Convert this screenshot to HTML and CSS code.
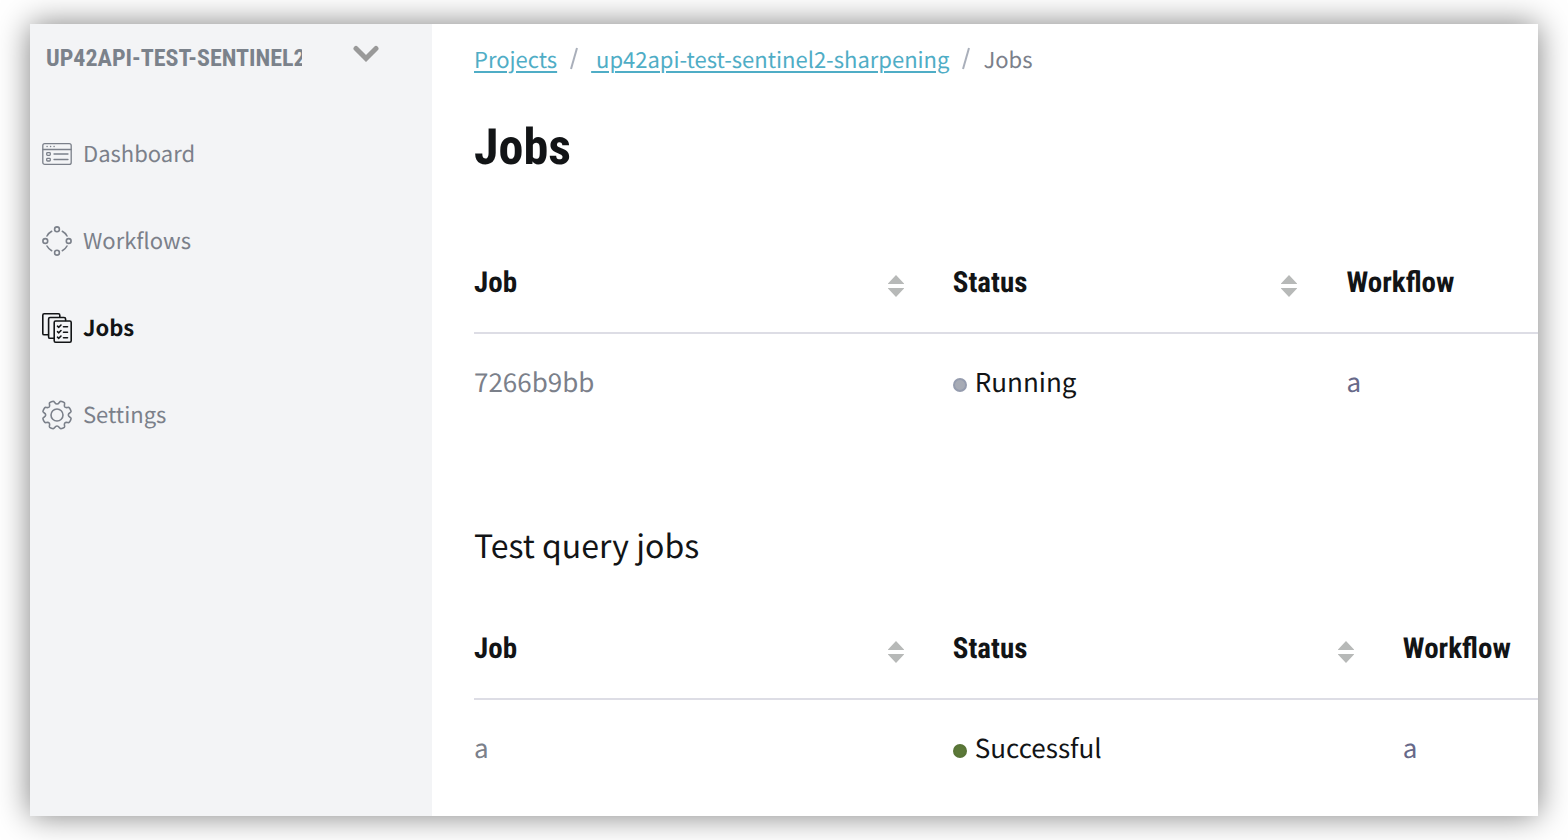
FILE: index.html
```html
<!DOCTYPE html>
<html lang="en">
<head>
<meta charset="utf-8">
<title>Jobs</title>
<link rel="stylesheet" href="styles.css">
</head>
<body>
<div class="app">
  <aside class="sidebar">
    <button class="project" type="button" aria-label="Switch project">
      <span class="project-name">UP42API-TEST-SENTINEL2</span>
      <svg class="chevron" viewBox="0 0 26 18" aria-hidden="true"><path d="M3 3.500 13 13.500 23 3.500"/></svg>
    </button>
    <nav class="nav">
      <a class="nav-link" href="#dashboard">
        <svg class="nav-icon" viewBox="0 0 30 30" aria-hidden="true">
          <rect x=".8" y="4.600" width="28.400" height="20.800" rx="2"/>
          <path d="M1 10.500h28M5 7.500h.2M8.500 7.500h.2M12 7.500h.2M12 15h14M12 20.500h14"/>
          <rect x="4.700" y="13.700" width="3.600" height="2.600" rx=".8"/>
          <rect x="4.700" y="19.400" width="3.600" height="2.600" rx=".8"/>
        </svg>
        <span>Dashboard</span>
      </a>
      <a class="nav-link" href="#workflows">
        <svg class="nav-icon nav-icon-medium" viewBox="0 0 30 30" aria-hidden="true">
          <circle cx="15" cy="3.300" r="2.400"/><circle cx="26.700" cy="15" r="2.400"/>
          <circle cx="15" cy="26.700" r="2.400"/><circle cx="3.300" cy="15" r="2.400"/>
          <path d="M20.300 5.300Q23.500 7 25 10M25 20Q23.500 23 20.300 24.700M9.700 24.700Q6.500 23 5 20M5 10Q6.500 7 9.700 5.300"/>
        </svg>
        <span>Workflows</span>
      </a>
      <a class="nav-link nav-link-active" href="#jobs" aria-current="page">
        <svg class="nav-icon nav-icon-medium" viewBox="0 0 30 30" aria-hidden="true">
          <path d="M6 21.800H2.200Q.8 21.800.8 20.400V2.200Q.8.800 2.200.800H16.400Q17.800.800 17.800 2.200V4"/>
          <path d="M12 25.300H8Q6.600 25.300 6.600 23.900V5.900Q6.600 4.500 8 4.500H22Q23.600 4.500 23.600 5.900V7.500"/>
          <rect x="12.200" y="8" width="17" height="21.200" rx="1.400"/>
          <path d="M15.500 13.200 16.800 14.300 19 12M15.500 18.700 16.800 19.800 19 17.500M15.500 24.200 16.800 25.300 19 23M21.500 13.800h4M21.500 19.300h4M21.500 24.800h4"/>
        </svg>
        <span>Jobs</span>
      </a>
      <a class="nav-link" href="#settings">
        <svg class="nav-icon nav-icon-medium" viewBox="0 0 30 30" aria-hidden="true">
          <circle cx="15" cy="15" r="6"/>
          <path d="M15 4C17.200 4 17.300 1.300 18.800 1.300Q20.800 1.500 22.300 2.600C23.500 3.700 21.400 5.400 22.800 7C24.400 8.600 26.300 6.500 27.300 7.700Q28.700 9.600 29.100 11.400C29.200 12.800 26.300 12.700 26.300 15C26.300 17.300 29.200 17.200 29.100 18.600Q28.700 20.600 27.300 22.300C26.300 23.500 24.400 21.400 22.800 23C21.400 24.600 23.500 26.300 22.300 27.400Q20.800 28.500 18.800 28.700C17.300 28.700 17.200 26 15 26C12.800 26 12.700 28.700 11.200 28.700Q9.200 28.500 7.700 27.400C6.500 26.300 8.600 24.600 7.200 23C5.600 21.400 3.700 23.500 2.700 22.300Q1.300 20.600.9 18.600C.8 17.200 3.700 17.300 3.700 15C3.700 12.700.8 12.800.9 11.400Q1.300 9.600 2.700 7.700C3.700 6.500 5.600 8.600 7.200 7C8.600 5.400 6.500 3.700 7.700 2.600Q9.200 1.500 11.200 1.300C12.700 1.300 12.800 4 15 4Z"/>
        </svg>
        <span>Settings</span>
      </a>
    </nav>
  </aside>
  <main class="main">
    <nav class="crumbs" aria-label="Breadcrumb">
      <a href="#projects">Projects</a>
      <svg class="slash" viewBox="0 0 8 24" aria-hidden="true"><path d="M7 1 1 22"/></svg>
      <a href="#project">&nbsp;up42api-test-sentinel2-sharpening</a>
      <svg class="slash" viewBox="0 0 8 24" aria-hidden="true"><path d="M7 1 1 22"/></svg>
      <span>Jobs</span>
    </nav>
    <h1>Jobs</h1>
    <table class="jobs">
      <colgroup><col class="col-job"><col class="col-status"><col></colgroup>
      <thead><tr>
        <th><div class="head">Job<button type="button" class="sort" aria-label="Sort by job"><svg viewBox="0 0 16 22"><path d="M8 0 16 8.500V9H0V8.500ZM0 13H16V13.500L8 22 0 13.500Z"/></svg></button></div></th>
        <th><div class="head">Status<button type="button" class="sort" aria-label="Sort by status"><svg viewBox="0 0 16 22"><path d="M8 0 16 8.500V9H0V8.500ZM0 13H16V13.500L8 22 0 13.500Z"/></svg></button></div></th>
        <th>Workflow</th>
      </tr></thead>
      <tbody><tr>
        <td class="job-id">7266b9bb</td>
        <td><span class="status"><i class="dot"></i>Running</span></td>
        <td class="workflow">a</td>
      </tr></tbody>
    </table>
    <h2>Test query jobs</h2>
    <table class="jobs">
      <colgroup><col class="col-job"><col class="col-status-wide"><col></colgroup>
      <thead><tr>
        <th><div class="head">Job<button type="button" class="sort" aria-label="Sort by test job"><svg viewBox="0 0 16 22"><path d="M8 0 16 8.500V9H0V8.500ZM0 13H16V13.500L8 22 0 13.500Z"/></svg></button></div></th>
        <th><div class="head">Status<button type="button" class="sort" aria-label="Sort by test status"><svg viewBox="0 0 16 22"><path d="M8 0 16 8.500V9H0V8.500ZM0 13H16V13.500L8 22 0 13.500Z"/></svg></button></div></th>
        <th>Workflow</th>
      </tr></thead>
      <tbody><tr>
        <td class="job-id">a</td>
        <td><span class="status"><i class="dot dot-success"></i>Successful</span></td>
        <td class="workflow">a</td>
      </tr></tbody>
    </table>
  </main>
</div>
</body>
</html>
```
FILE: styles.css
```css
* { box-sizing: border-box; }

body {
  margin: 0;
  padding: 24px 30px;
  background: #fff;
  color: #121416;
  font-family: "Noto Sans CJK SC", "Noto Sans", sans-serif;
  text-rendering: geometricPrecision;
}

button {
  padding: 0;
  border: 0;
  background: none;
  color: inherit;
  font: inherit;
  cursor: pointer;
}

.app {
  display: flex;
  min-height: calc(100vh - 48px);
  background: #fff;
  box-shadow: 0 0 30px rgba(0, 0, 0, .5);
}

.sidebar {
  flex: none;
  width: 402px;
  background: #f3f4f6;
  color: #7b808a;
}

.project {
  display: flex;
  align-items: center;
  gap: 51px;
  padding: 18px 16px;
  color: #7b828b;
  font: bold 24px/32px "Roboto Condensed", "Liberation Sans Narrow", Roboto, sans-serif;
}

.project-name {
  width: 256px;
  overflow: hidden;
  text-align: left;
  white-space: nowrap;
}

.chevron {
  width: 26px;
  height: 18px;
  margin-bottom: 8px;
  fill: none;
  stroke: #999;
  stroke-width: 5;
  stroke-linecap: round;
}

.nav {
  display: flex;
  flex-direction: column;
  gap: 57px;
  padding: 47px 12px;
}

.nav-link {
  display: flex;
  align-items: center;
  gap: 11px;
  color: inherit;
  font-size: 22px;
  line-height: 28px;
  text-decoration: none;
}

.nav-link span { padding-bottom: 2px; }

.nav-link-active { color: #121416; font-weight: bold; }

.nav-icon {
  flex: none;
  width: 30px;
  height: 30px;
  fill: none;
  stroke: currentColor;
  stroke-width: 1.3;
  stroke-linecap: round;
  stroke-linejoin: round;
}

.nav-icon-medium { stroke-width: 1.6; }

.main {
  flex: 1;
  min-width: 0;
  padding: 19px 0 20px 42px;
}

.crumbs {
  display: flex;
  align-items: center;
  gap: 13px;
  color: #7b808a;
  font-size: 22px;
  line-height: 32px;
}

.crumbs a {
  color: #4fadc6;
  text-decoration-thickness: 2px;
  text-underline-offset: 3px;
}

.slash {
  width: 8px;
  height: 24px;
  fill: none;
  stroke: #a9afba;
  stroke-width: 2;
}

h1 {
  margin: 43px 0 70px;
  font: bold 50px/60px "Roboto Condensed", "Liberation Sans Narrow", Roboto, sans-serif;
}

h2 {
  margin: 119px 0 45px;
  font-size: 32px;
  font-weight: normal;
  line-height: 48px;
}

.jobs {
  width: 100%;
  table-layout: fixed;
  border-collapse: collapse;
}

.col-job { width: 45%; }
.col-status { width: 37%; }
.col-status-wide { width: 42.3%; }

th {
  padding: 15px 0 29px;
  border-bottom: 2px solid #dddde5;
  font: bold 29px/40px "Roboto Condensed", "Liberation Sans Narrow", Roboto, sans-serif;
  text-align: left;
}

.head {
  display: flex;
  align-items: center;
  justify-content: space-between;
  padding-right: 49px;
}

.sort {
  width: 16px;
  height: 22px;
  margin-top: 5px;
}

.sort svg {
  display: block;
  width: 16px;
  height: 22px;
  fill: #b7b9b8;
}

td {
  padding: 28px 0 0;
  font-size: 26px;
  line-height: 40px;
}

.job-id { color: #7b808a; }
.workflow { color: #676989; }

.status {
  display: flex;
  align-items: center;
  gap: 8px;
}

.dot {
  width: 14px;
  height: 14px;
  margin-top: 5px;
  border: 2px solid #959cae;
  border-radius: 50%;
  background: #a7abb5;
}

.dot-success {
  border-color: #587436;
  background: #5b7838;
}
```
